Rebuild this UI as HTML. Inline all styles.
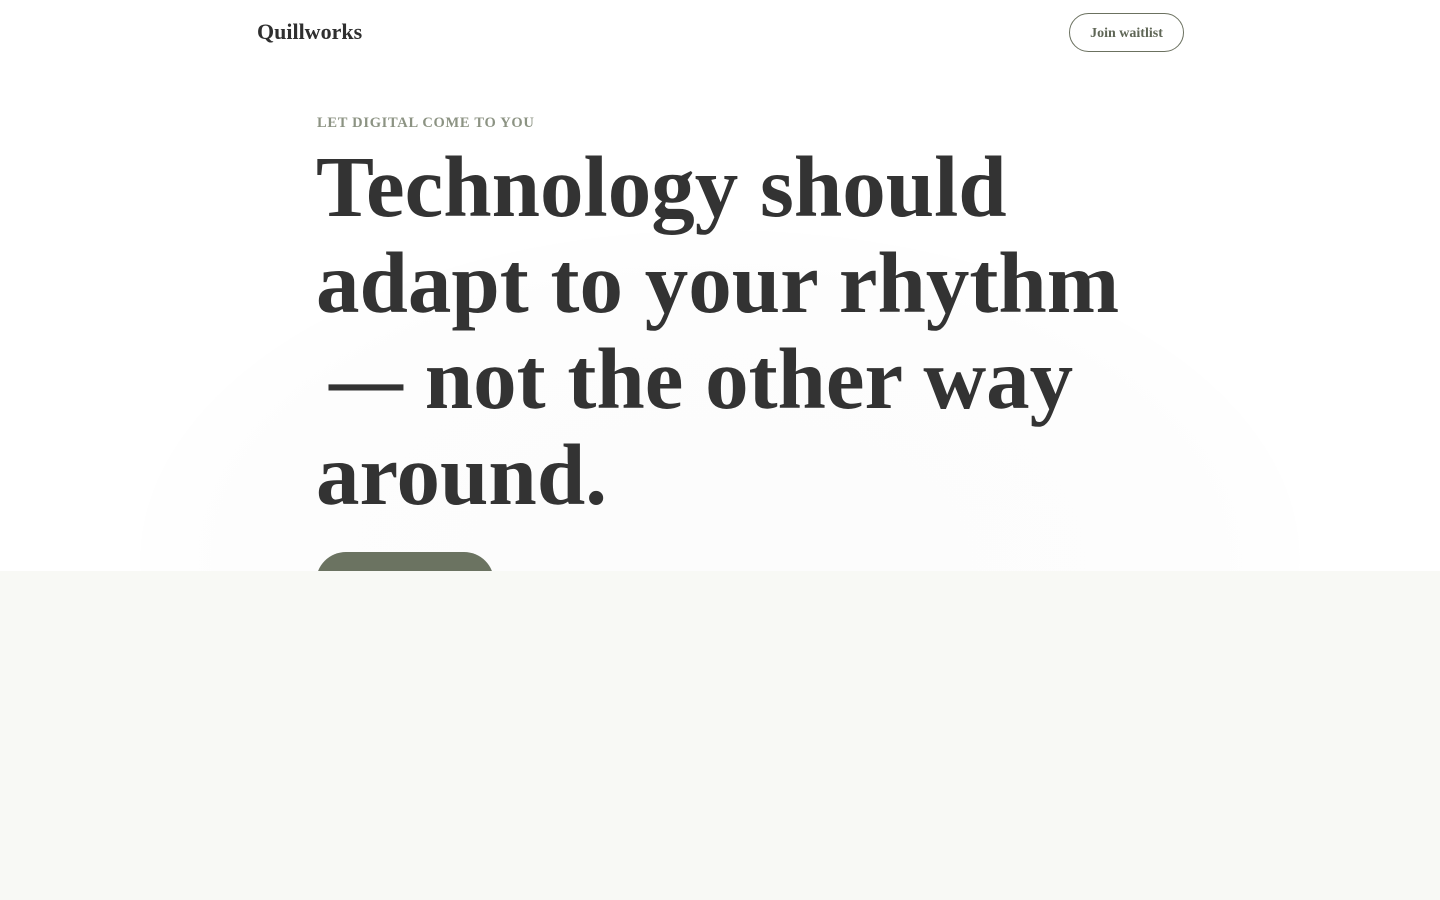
<!DOCTYPE html>
<html><head><meta charset="utf-8"><style>
html,body{margin:0;padding:0;width:1440px;height:900px;overflow:hidden;background:#fff;font-family:"Liberation Serif",serif;position:relative;}
.nav{position:absolute;left:256px;top:0;width:928px;height:64px;}
.logo{position:absolute;left:1px;top:19px;font-size:22px;font-weight:bold;color:#2f2f2f;}
.btn{position:absolute;left:813px;top:13px;width:113px;height:37px;border:1px solid #6b7160;border-radius:20px;box-sizing:content-box;text-align:center;line-height:39px;font-size:14px;font-weight:bold;color:#5f6656;}
.glow{position:absolute;left:140px;top:230px;width:1160px;height:660px;border-radius:50%;background:radial-gradient(ellipse at center,#fcfcfc 0%,#fdfdfd 60%,#fff 75%);}
.eyebrow{position:absolute;left:317px;top:115px;font-size:14.5px;font-weight:bold;letter-spacing:0.7px;color:#8c9383;}
h1{position:absolute;left:316px;top:139px;margin:0;width:830px;font-size:87px;line-height:96px;font-weight:bold;color:#333;}
.dash{display:inline-block;transform:scaleX(0.85);transform-origin:right center;}
.cta{position:absolute;left:316px;top:552px;width:178px;height:60px;border-radius:30px;background:#6b7361;}
.bottom{position:absolute;left:0;top:571px;width:1440px;height:329px;background:#f8f9f5;}
</style></head><body>
<div class="glow"></div>
<div class="nav"><div class="logo">Quillworks</div><div class="btn">Join waitlist</div></div>
<div class="eyebrow">LET DIGITAL COME TO YOU</div>
<h1>Technology should adapt to your rhythm <span class="dash">—</span> not the other way around.</h1>
<div class="cta"></div>
<div class="bottom"></div>
</body></html>
